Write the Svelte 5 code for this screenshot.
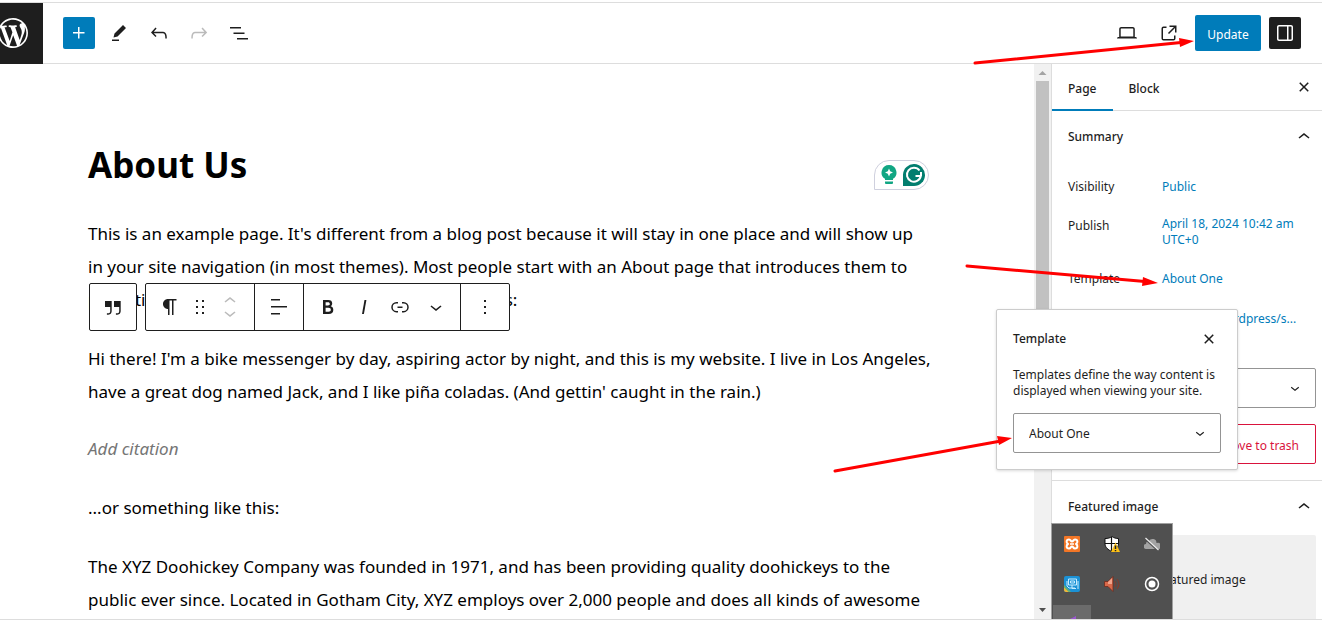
<script lang="ts">
    const icons : Record<string, string> = {
        plus: 'M11 12.5V17.5H12.5V12.5H17.5V11H12.5V6H11V11H6V12.5H11Z',
        edit: 'm19 7-3-3-8.5 8.5-1 4 4-1L19 7Zm-7 11.5H5V20h7v-1.5Z',
        undo: 'M18.3 11.7c-.6-.6-1.4-.9-2.3-.9H6.7l2.9-3.3-1.1-1-4.5 5L8.5 16l1-1-2.7-2.7H16c.5 0 .9.2 1.3.5 1 1 1 3.4 1 4.5v.3h1.5v-.2c0-1.5 0-4.3-1.5-5.7z',
        redo: 'M15.6 6.5l-1.1 1 2.9 3.3H8c-.9 0-1.7.3-2.3.9-1.4 1.5-1.4 4.2-1.4 5.6v.2h1.5v-.3c0-1.1 0-3.5 1-4.5.3-.3.7-.5 1.3-.5h9.2L14.5 15l1.1 1.1 4.6-4.6-4.6-5z',
        list: 'M3 6h11v1.5H3V6Zm3.5 5.5h11V13h-11v-1.5ZM21 17H10v1.5h11V17Z',
        laptop: 'M20.5 16h-.7V8c0-1.1-.9-2-2-2H6.2c-1.1 0-2 .9-2 2v8h-.7c-.8 0-1.5.7-1.5 1.5h20c0-.8-.7-1.5-1.5-1.5zM5.7 8c0-.3.2-.5.5-.5h11.6c.3 0 .5.2.5.5v7.6H5.7V8z',
        external: 'M19.5 4.5h-7V6h4.44l-5.97 5.97 1.06 1.06L18 7.06v4.44h1.5v-7Zm-13 1a2 2 0 0 0-2 2v10a2 2 0 0 0 2 2h10a2 2 0 0 0 2-2v-3H17v3a.5.5 0 0 1-.5.5h-10a.5.5 0 0 1-.5-.5v-10a.5.5 0 0 1 .5-.5h3V5.5h-3Z',
        drawer: 'M18 4H6c-1.1 0-2 .9-2 2v12c0 1.1.9 2 2 2h12c1.1 0 2-.9 2-2V6c0-1.1-.9-2-2-2zm-4 14.5H6c-.3 0-.5-.2-.5-.5V6c0-.3.2-.5.5-.5h8v13zm4.5-.5c0 .3-.2.5-.5.5h-2.5v-13H18c.3 0 .5.2.5.5v12z',
        close: 'M12 13.06l3.712 3.713 1.061-1.06L13.061 12l3.712-3.712-1.06-1.06L12 10.938 8.288 7.227l-1.061 1.06L10.939 12l-3.712 3.712 1.06 1.061L12 13.061z',
        up: 'M6.5 12.4L12 8l5.5 4.4-.9 1.2L12 10l-4.5 3.6-1-1.2z',
        down: 'M17.5 11.6L12 16l-5.5-4.4.9-1.2L12 14l4.5-3.6 1 1.2z',
        quote: 'M13 6v6h5.2v4c0 .8-.2 1.4-.5 1.7-.6.6-1.6.6-2.5.5h-.3v1.5h.5c1 0 2.3-.1 3.3-1 .6-.6 1-1.6 1-2.8V6H13zm-9 6h5.2v4c0 .8-.2 1.4-.5 1.7-.6.6-1.6.6-2.5.5h-.3v1.5h.5c1 0 2.3-.1 3.3-1 .6-.6 1-1.6 1-2.8V6H4v6z',
        paragraph: 'm9.99609 14v-.2251l.00391.0001v6.225h1.5v-14.5h2.5v14.5h1.5v-14.5h3v-1.5h-8.50391c-2.76142 0-5 2.23858-5 5 0 2.7614 2.23858 5 5 5z',
        drag: 'M8 7h2V5H8v2zm0 6h2v-2H8v2zm0 6h2v-2H8v2zm6-14v2h2V5h-2zm0 8h2v-2h-2v2zm0 6h2v-2h-2v2z',
        align: 'M13 5.5H4V4h9v1.5Zm7 7H4V11h16v1.5Zm-7 7H4V18h9v1.5Z',
        bold: 'M14.7 11.3c1-.6 1.5-1.6 1.5-3 0-2.3-1.3-3.4-4-3.4H7v14h5.8c1.4 0 2.5-.3 3.3-1 .8-.7 1.2-1.7 1.2-2.9.1-1.9-.8-3.1-2.6-3.7zm-5.1-4h2.3c.6 0 1.1.1 1.4.4.3.3.5.7.5 1.2s-.2 1-.5 1.2c-.3.3-.8.4-1.4.4H9.6V7.3zm4.6 9c-.4.3-1 .4-1.7.4H9.6v-3.9h2.9c.7 0 1.3.2 1.7.5.4.3.6.8.6 1.5s-.2 1.2-.6 1.5z',
        italic: 'M12.5 5L10 19h1.9l2.5-14z',
        link: 'M10 17.389H8.444A5.194 5.194 0 1 1 8.444 7H10v1.5H8.444a3.694 3.694 0 0 0 0 7.389H10v1.5ZM14 7h1.556a5.194 5.194 0 0 1 0 10.39H14v-1.5h1.556a3.694 3.694 0 0 0 0-7.39H14V7Zm-4.5 6h5v-1.5h-5V13Z',
        more: 'M13 19h-2v-2h2v2zm0-6h-2v-2h2v2zm0-6h-2V5h2v2z'
    };

    let template = 'About One';
    let author = 'admin';
    let tab = 'Page';
</script>

{#snippet icon(name : string)}
    <svg class="icon" width="24" height="24" viewBox="0 0 24 24" aria-hidden="true"><path d={icons[name]} /></svg>
{/snippet}

<div class="editor">
    <header>
        <a class="logo" href="#dashboard" aria-label="View Pages">
            <svg width="36" height="36" viewBox="-2 -2 24 24" aria-hidden="true">
                <path d="M20 10c0-5.51-4.49-10-10-10C4.48 0 0 4.49 0 10c0 5.52 4.48 10 10 10 5.51 0 10-4.48 10-10zM7.78 15.37L4.37 6.22c.55-.02 1.17-.08 1.17-.08.5-.06.44-1.13-.06-1.11 0 0-1.45.11-2.37.11-.18 0-.37 0-.58-.01C4.12 2.69 6.87 1.11 10 1.11c2.33 0 4.45.87 6.05 2.34-.68-.11-1.65.39-1.65 1.58 0 .74.45 1.36.9 2.1.35.61.55 1.36.55 2.46 0 1.49-1.4 5-1.4 5l-3.03-8.37c.54-.02.82-.17.82-.17.5-.05.44-1.25-.06-1.22 0 0-1.44.12-2.38.12-.87 0-2.33-.12-2.33-.12-.5-.03-.56 1.2-.06 1.22l.92.08 1.26 3.41zM17.41 10c.24-.64.74-1.87.43-4.25.7 1.29 1.05 2.71 1.05 4.25 0 3.29-1.73 6.24-4.4 7.78.97-2.59 1.94-5.2 2.92-7.78zM6.1 18.09C3.12 16.65 1.11 13.53 1.11 10c0-1.3.23-2.48.72-3.59C3.25 10.3 4.67 14.2 6.1 18.09zm4.03-6.63l2.58 6.98c-.86.29-1.76.45-2.71.45-.79 0-1.57-.11-2.29-.33.81-2.38 1.62-4.74 2.42-7.1z" />
            </svg>
        </a>
        <div class="tools">
            <button class="tool primary" aria-label="Toggle block inserter">{@render icon('plus')}</button>
            <button class="tool" aria-label="Tools">{@render icon('edit')}</button>
            <button class="tool" aria-label="Undo">{@render icon('undo')}</button>
            <button class="tool faded" aria-label="Redo">{@render icon('redo')}</button>
            <button class="tool" aria-label="Document overview">{@render icon('list')}</button>
        </div>
        <div class="settings">
            <button class="tool view" aria-label="View">{@render icon('laptop')}</button>
            <a class="tool view" href="#preview" aria-label="View page">{@render icon('external')}</a>
            <button class="update">Update</button>
            <button class="tool dark" aria-label="Settings">{@render icon('drawer')}</button>
        </div>
    </header>

    <div class="body">
        <main>
            <h1>About Us</h1>
            <p>
                This is an example page. It's different from a blog post because it will stay in one place and will show up<br />
                in your site navigation (in most themes). Most people start with an About page that introduces them to<br />
                potential site visitors. It might say something like this:
            </p>
            <blockquote>
                <div class="toolbar">
                    <div class="group">
                        <button class="wide" aria-label="Select parent block: Quote">{@render icon('quote')}</button>
                    </div>
                    <div class="group">
                        <div class="section block">
                            <button aria-label="Paragraph">{@render icon('paragraph')}</button>
                            <button class="drag" aria-label="Drag">{@render icon('drag')}</button>
                            <div class="movers">
                                <button aria-label="Move up">{@render icon('up')}</button>
                                <button aria-label="Move down">{@render icon('down')}</button>
                            </div>
                        </div>
                        <div class="section"><button class="wide" aria-label="Align text">{@render icon('align')}</button></div>
                        <div class="section format">
                            <button aria-label="Bold">{@render icon('bold')}</button>
                            <button aria-label="Italic">{@render icon('italic')}</button>
                            <button aria-label="Link">{@render icon('link')}</button>
                            <button aria-label="More">{@render icon('down')}</button>
                        </div>
                        <div class="section"><button class="wide" aria-label="Options">{@render icon('more')}</button></div>
                    </div>
                </div>
                <p>
                    Hi there! I'm a bike messenger by day, aspiring actor by night, and this is my website. I live in Los Angeles,<br />
                    have a great dog named Jack, and I like piña coladas. (And gettin' caught in the rain.)
                </p>
                <cite>Add citation</cite>
            </blockquote>
            <p>...or something like this:</p>
            <p>
                The XYZ Doohickey Company was founded in 1971, and has been providing quality doohickeys to the<br />
                public ever since. Located in Gotham City, XYZ employs over 2,000 people and does all kinds of awesome
            </p>

            <div class="checker">
                <svg width="16" height="20" viewBox="0 0 16 20" aria-hidden="true">
                    <path fill="#11a683" d="M8 0a7.500 7.500 0 0 0-4 13.800V15h8v-1.200A7.500 7.500 0 0 0 8 0zM4 16.500h8V18q0 1-1 1H5q-1 0-1-1z" />
                    <path fill="#fff" d="M8 3.500l1.200 2.800L12 7.500 9.200 8.700 8 11.500 6.800 8.700 4 7.500l2.800-1.200z" />
                </svg>
                <svg width="22" height="22" viewBox="0 0 22 22" aria-hidden="true">
                    <path fill="#027e6f" d="M0 22V10.500A11 11 0 1 1 11 22z" />
                    <path fill="none" stroke="#fff" stroke-width="2" d="M16.500 6.500A7 7 0 1 0 17.800 12H12.500M18 8v4" />
                </svg>
            </div>
        </main>

        <div class="scrollbar" aria-hidden="true">
            <svg width="17" height="17" viewBox="0 0 17 17"><path fill="#a3a3a3" d="M4.500 11h8L8.500 7z" /></svg>
            <div class="thumb"></div>
            <svg width="17" height="17" viewBox="0 0 17 17"><path fill="#505050" d="M5 6h7l-3.500 4z" /></svg>
        </div>

        <aside>
            <div class="tabs">
                {#each ['Page', 'Block'] as name}
                    <button class:active={tab === name} on:click={() => tab = name}>{name}</button>
                {/each}
                <button class="close" aria-label="Close Settings">{@render icon('close')}</button>
            </div>

            <section class="summary">
                <h2><button>Summary {@render icon('up')}</button></h2>
                <dl>
                    <div><dt>Visibility</dt><dd><a href="#visibility">Public</a></dd></div>
                    <div class="tall"><dt>Publish</dt><dd><a href="#publish">April 18, 2024 10:42 am<br />UTC+0</a></dd></div>
                    <div><dt>Template</dt><dd><a href="#template">About One</a></dd></div>
                    <div><dt>URL</dt><dd><a href="#url">localhost/wordpress/s...</a></dd></div>
                </dl>
                <div class="select">
                    <select aria-label="Author" bind:value={author}>
                        <option>admin</option>
                    </select>
                    {@render icon('down')}
                </div>
                <button class="trash">Move to trash</button>
            </section>

            <section class="featured">
                <h2><button>Featured image {@render icon('up')}</button></h2>
                <button class="placeholder">Set featured image</button>
            </section>

            <div class="popover" role="dialog" aria-labelledby="template-title">
                <div class="popover-head">
                    <h3 id="template-title">Template</h3>
                    <button aria-label="Close">{@render icon('close')}</button>
                </div>
                <p>Templates define the way content is<br />displayed when viewing your site.</p>
                <div class="select">
                    <select aria-label="Template" bind:value={template}>
                        <option>About One</option>
                        <option>Default template</option>
                    </select>
                    {@render icon('down')}
                </div>
            </div>

            <div class="tray">
                <svg width="16" height="16" viewBox="0 0 16 16" aria-hidden="true">
                    <rect width="16" height="16" rx="1" fill="#f37626" />
                    <path fill="none" stroke="#fff" stroke-width="2" stroke-linejoin="round" d="M5 3.500C2 3.500 2 7 4 8 2 9 2 12.500 5 12.500c2 0 1.500-2 3-2s1 2 3 2c3 0 3-3.500 1-4.500C14 7 14 3.500 11 3.500c-2 0-1.500 2-3 2s-1-2-3-2z" />
                    <path stroke="#fff" stroke-width="1.500" d="M6 8h4" />
                </svg>
                <svg width="16" height="16" viewBox="0 0 16 16" aria-hidden="true">
                    <path fill="#fff" stroke="#111" d="M8 .5c2 1.500 4 2 6.500 2V8c0 3-3 6-6.500 7.500C4 14 1 11 1 8V2.500c3 0 5-.5 7-2z" />
                    <path stroke="#111" stroke-width="1.200" d="M7.500 1v14M1 7.500h13.500" />
                    <path fill="#fdc116" d="M11.500 6.500L16 16H7z" />
                    <path stroke="#222" stroke-width="1.500" d="M11.500 9.500v3.500M11.500 14v1.200" />
                </svg>
                <svg width="16" height="16" viewBox="0 0 16 16" aria-hidden="true">
                    <path fill="#a3a3a3" d="M2.500 13A2.500 2.500 0 0 1 2 8a3 3 0 0 1 3-3 4 4 0 0 1 7.500 2A3 3 0 0 1 15 13z" />
                    <path stroke="#505050" stroke-width="2" d="M2 3.500l12 11" />
                    <path stroke="#eee" stroke-width="1.200" d="M1.500 2l13 12" />
                </svg>
                <svg width="16" height="16" viewBox="0 0 16 16" aria-hidden="true">
                    <rect width="16" height="16" rx="2" fill="#1b91d5" />
                    <path fill="#f1b634" d="M0 11l5 5H2q-2 0-2-2z" />
                    <path fill="#68b56b" d="M0 9l7 7H5l-5-5z" />
                    <path fill="none" stroke="#c7ecff" d="M4.500 3h8v6h-8zM6.500 5h4v2h-4zM3 5v5l2 2h6M8 9v3.500h4M14 5v8" />
                </svg>
                <svg width="16" height="16" viewBox="0 0 16 16" aria-hidden="true">
                    <path fill="#d9694a" stroke="#6f2a1d" stroke-width=".8" d="M.5 5.500H4l5-5v15l-5-5H.5z" />
                    <path fill="#f2a38b" d="M4 6l4-4v6H4z" />
                    <path fill="none" stroke="#7d3d30" stroke-width="1.200" d="M11 5q2 3 0 6M13 3q4 5 0 10" />
                </svg>
                <svg width="16" height="16" viewBox="0 0 16 16" aria-hidden="true">
                    <circle cx="8" cy="8" r="6.500" fill="none" stroke="#fff" stroke-width="1.500" />
                    <circle cx="8" cy="8" r="3.500" fill="#fff" />
                </svg>
                <div class="hovered">
                    <svg width="16" height="16" viewBox="0 0 16 16" aria-hidden="true">
                        <path fill="#9a56cf" d="M4 4l8-4v16l-4-2-8-7V5.500l4 2.500z" />
                    </svg>
                </div>
            </div>
        </aside>
    </div>

    <!-- callout arrows drawn over the whole editor -->
    <svg class="arrows" width="360" height="480" viewBox="0 0 360 480" aria-hidden="true">
        <g stroke="#f00" stroke-width="3" stroke-linecap="round">
            <path d="M14 63L220 42.500M6 266L184 281.500M-126 471L40 441" />
        </g>
        <path fill="#f00" d="M233 41l-15-3 1 9zM197 283l-15-6-1 9zM51 438l-15-2 2 9z" />
    </svg>
</div>

<style>
    :global(body)
    {
        background: #fff;
    }

    .editor
    {
        position: relative;
        display: flex;
        flex-direction: column;
        box-sizing: border-box;
        height: 100vh;
        padding-top: 2px;
        overflow: hidden;
        border-bottom: 1px solid #ddd;
        color: #1e1e1e;
        font-family: "Noto Sans", sans-serif;
        font-size: 12px;
        line-height: 16px;
    }

    button, select
    {
        margin: 0;
        padding: 0;
        border: 0;
        background: none;
        color: inherit;
        font: inherit;
    }

    a
    {
        color: #007cba;
        text-decoration: none;
    }

    svg
    {
        flex: none;
        display: block;
    }

    .icon
    {
        fill: currentColor;
    }

    header
    {
        display: flex;
        align-items: center;
        height: 60px;
        flex: none;
        border-top: 1px solid #ddd;
        border-bottom: 1px solid #ddd;
    }

    .logo
    {
        display: flex;
        align-items: center;
        justify-content: center;
        width: 60px;
        height: 61px;
        margin-left: -17px;
        background: #1e1e1e;
        fill: #fff;
    }

    .tools
    {
        display: flex;
        gap: 8px;
        flex: 1;
        padding-left: 20px;
    }

    .settings
    {
        display: flex;
        align-items: center;
        gap: 8px;
        padding-right: 21px;
    }

    .tool
    {
        display: flex;
        align-items: center;
        justify-content: center;
        width: 32px;
        height: 32px;
        border-radius: 2px;
        color: #1e1e1e;
    }

    .view
    {
        margin-right: 2px;
    }

    .faded
    {
        color: #bbb;
    }

    .primary
    {
        background: #007cba;
        color: #fff;
    }

    .dark
    {
        background: #1e1e1e;
        color: #fff;
    }

    .update
    {
        width: 66px;
        height: 36px;
        padding-top: 4px;
        border-radius: 2px;
        background: #007cba;
        color: #fff;
    }

    .body
    {
        display: flex;
        flex: 1;
        min-height: 0;
    }

    main
    {
        position: relative;
        flex: 1;
        min-width: 0;
        padding: 77px 0 0 88px;
        overflow: hidden;
        color: #000;
        font-size: 17px;
        line-height: 33px;
        white-space: nowrap;
    }

    h1
    {
        margin: 0 0 28px;
        font-size: 35px;
        line-height: 48px;
    }

    main p
    {
        margin: 0 0 26px;
    }

    blockquote
    {
        position: relative;
        margin: 0 0 26px;
    }

    blockquote p
    {
        margin-bottom: 24px;
    }

    cite
    {
        display: block;
        color: #757575;
    }

    .toolbar
    {
        position: absolute;
        top: -59px;
        left: 1px;
        display: flex;
        gap: 8px;
        color: #1e1e1e;
    }

    .group
    {
        display: flex;
        height: 46px;
        border: 1px solid #1e1e1e;
        border-radius: 2px;
        background: #fff;
    }

    .toolbar button
    {
        display: flex;
        align-items: center;
        justify-content: center;
        width: 36px;
    }

    .toolbar .wide
    {
        width: 46px;
    }

    .section
    {
        display: flex;
    }

    .section + .section
    {
        border-left: 1px solid #1e1e1e;
    }

    .section .wide
    {
        width: 48px;
    }

    .block
    {
        padding: 0 11px 0 6px;
    }

    .toolbar .drag
    {
        width: 24px;
    }

    .movers
    {
        display: flex;
        flex-direction: column;
        justify-content: center;
        width: 31px;
        color: #bbb;
    }

    .movers button
    {
        height: 12px;
        width: 36px;
    }

    .format
    {
        padding: 0 6px;
    }

    .checker
    {
        position: absolute;
        top: 96px;
        right: 105px;
        display: flex;
        align-items: center;
        gap: 6px;
        padding: 3px 3px 3px 6px;
        border: 1px solid #cfd0de;
        border-radius: 15px 15px 15px 0;
        background: #fff;
    }

    .scrollbar
    {
        display: flex;
        flex-direction: column;
        flex: none;
        width: 17px;
        background: #f1f1f1;
    }

    .thumb
    {
        width: 13px;
        height: 300px;
        margin: 0 2px auto;
        background: #c1c1c1;
    }

    aside
    {
        position: relative;
        flex: none;
        width: 270px;
        border-left: 1px solid #ddd;
    }

    .tabs
    {
        display: flex;
        height: 46px;
        border-bottom: 1px solid #ddd;
        font-weight: 500;
    }

    .tabs button
    {
        height: 47px;
        padding: 4px 16px 0;
        border-bottom: 2px solid transparent;
    }

    .tabs .active
    {
        border-color: #007cba;
    }

    .tabs .close
    {
        margin-left: auto;
        padding: 0 6px;
    }

    h2
    {
        margin: 0;
        font-size: 12px;
        font-weight: 500;
    }

    h2 button
    {
        display: flex;
        align-items: center;
        justify-content: space-between;
        width: 100%;
        height: 51px;
    }

    section
    {
        padding: 0 6px 16px 16px;
    }

    dl
    {
        margin: 0;
        padding: 5px 0 29px;
    }

    dl div
    {
        display: flex;
        align-items: center;
        height: 40px;
    }

    dl .tall
    {
        height: 52px;
        align-items: flex-start;
        box-sizing: border-box;
    }

    .tall dt
    {
        padding-top: 11px;
    }

    .tall dd
    {
        padding-top: 9px;
    }

    dt
    {
        width: 94px;
    }

    dd
    {
        margin: 0;
        white-space: nowrap;
    }

    .select
    {
        position: relative;
        display: flex;
        align-items: center;
    }

    select
    {
        appearance: none;
        width: 100%;
        height: 40px;
        padding: 2px 15px 0;
        border: 1px solid #949494;
        border-radius: 2px;
        background: #fff;
    }

    .select .icon
    {
        position: absolute;
        right: 12px;
        width: 18px;
        height: 18px;
        pointer-events: none;
    }

    .trash
    {
        display: block;
        width: 100%;
        height: 40px;
        margin-top: 16px;
        padding: 4px 16px 0 0;
        border: 1px solid #d9133c;
        border-radius: 2px;
        color: #d9133c;
        text-align: right;
    }

    .featured
    {
        border-top: 1px solid #ddd;
    }

    .placeholder
    {
        width: 100%;
        height: 90px;
        margin-top: 3px;
        border-radius: 2px;
        background: #f0f0f0;
    }

    .popover
    {
        position: absolute;
        top: 245px;
        right: 84px;
        box-sizing: border-box;
        width: 242px;
        padding: 16px;
        border: 1px solid #ccc;
        border-radius: 2px;
        background: #fff;
        box-shadow: 0 1px 3px rgba(0, 0, 0, .15);
    }

    .popover-head
    {
        display: flex;
        align-items: center;
        justify-content: space-between;
        height: 25px;
    }

    h3
    {
        margin: 0;
        font-size: 12px;
        font-weight: 500;
    }

    .popover p
    {
        margin: 16px 0 14px;
        white-space: nowrap;
    }

    .tray
    {
        position: absolute;
        top: 459px;
        left: -1px;
        display: grid;
        grid-template-columns: repeat(3, 40px);
        grid-auto-rows: 40px;
        place-items: center;
        border: 1px solid #a0a0a0;
        background: #505050;
    }

    .hovered
    {
        display: flex;
        align-items: center;
        justify-content: center;
        width: 38px;
        height: 38px;
        background: #6b6b6b;
    }

    .arrows
    {
        position: absolute;
        top: 0;
        right: 1px;
        overflow: visible;
        pointer-events: none;
    }
</style>
